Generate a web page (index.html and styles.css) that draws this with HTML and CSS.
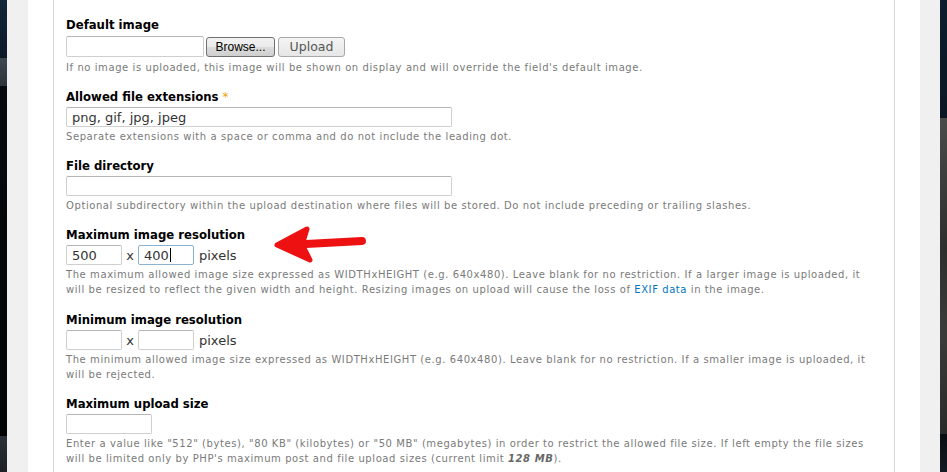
FILE: index.html
```html
<!DOCTYPE html>
<html>
<head>
<meta charset="utf-8">
<link rel="stylesheet" href="styles.css">
</head>
<body>
<div class="page">
  <div class="edge-left"></div>
  <div class="gutter"></div>
  <div class="panel">
    <div class="fieldset">
      <div class="item item-file">
        <label class="label">Default image</label>
        <div class="row">
          <span class="input w-file"></span>
          <span class="btn btn-browse">Browse...</span>
          <span class="btn btn-upload">Upload</span>
        </div>
        <div class="desc">If no image is uploaded, this image will be shown on display and will override the field's default image.</div>
      </div>
      <div class="item">
        <label class="label">Allowed file extensions <span class="req">*</span></label>
        <div class="row"><span class="input w-long">png, gif, jpg, jpeg</span></div>
        <div class="desc">Separate extensions with a space or comma and do not include the leading dot.</div>
      </div>
      <div class="item">
        <label class="label">File directory</label>
        <div class="row"><span class="input w-long"></span></div>
        <div class="desc">Optional subdirectory within the upload destination where files will be stored. Do not include preceding or trailing slashes.</div>
      </div>
      <div class="item tall">
        <label class="label">Maximum image resolution</label>
        <div class="row">
          <span class="input w-res">500</span><span class="times">x</span><span class="input w-res focus">400<span class="caret"></span></span><span class="unit">pixels</span>
        </div>
        <div class="desc">The maximum allowed image size expressed as WIDTHxHEIGHT (e.g. 640x480). Leave blank for no restriction. If a larger image is uploaded, it will be resized to reflect the given width and height. Resizing images on upload will cause the loss of <a class="link">EXIF data</a> in the image.</div>
      </div>
      <div class="item">
        <label class="label">Minimum image resolution</label>
        <div class="row">
          <span class="input w-res"></span><span class="times">x</span><span class="input w-res"></span><span class="unit">pixels</span>
        </div>
        <div class="desc">The minimum allowed image size expressed as WIDTHxHEIGHT (e.g. 640x480). Leave blank for no restriction. If a smaller image is uploaded, it will be rejected.</div>
      </div>
      <div class="item">
        <label class="label">Maximum upload size</label>
        <div class="row"><span class="input w-size"></span></div>
        <div class="desc">Enter a value like "512" (bytes), "80 KB" (kilobytes) or "50 MB" (megabytes) in order to restrict the allowed file size. If left empty the file sizes will be limited only by PHP's maximum post and file upload sizes (current limit <em class="limit">128 MB</em>).</div>
      </div>
    </div>
  </div>
  <div class="gutter gutter-right"></div>
  <div class="edge-right"></div>
  <svg class="arrow" width="947" height="472" viewBox="0 0 947 472">
    <path d="M306 244 L362 241" stroke="#ee1111" stroke-width="8" stroke-linecap="round" fill="none"/>
    <path d="M277 245 L307 229 L303 242 L304 248 L310 260 Z" fill="#ee1111" stroke="#ee1111" stroke-width="5" stroke-linejoin="round"/>
  </svg>
</div>
</body>
</html>
```
FILE: styles.css
```css
html, body {
  margin: 0;
  padding: 0;
  height: 100%;
  overflow: hidden;
}
.page {
  position: relative;
  display: flex;
  width: 947px;
  height: 472px;
  font-family: "DejaVu Sans", Verdana, sans-serif;
  color: #333;
}
.edge-left {
  width: 7px;
  flex: none;
  background: linear-gradient(to bottom, #12263a 0, #0c1a28 58px, #3e4852 58px, #2c333b 86px, #060a0f 86px, #020304 436px, #2b3138 436px, #1d2126 472px);
}
.edge-right {
  width: 7px;
  flex: none;
  background: linear-gradient(to bottom, #0d1d2d 0, #0a1622 118px, #4a4a48 118px, #2e2e2c 250px, #3c3b39 330px, #2a2a28 434px, #0a0d12 434px, #141a22 472px);
}
.gutter {
  width: 21px;
  flex: none;
  background: #f0f0f0;
}
.gutter-right {
  width: 20px;
}
.panel {
  flex: 1;
  background: #fff;
  padding-left: 25px;
  padding-right: 25px;
}
.fieldset {
  height: 100%;
  border-left: 1px solid #d6d6d6;
  border-right: 1px solid #d6d6d6;
  padding: 17px 12px 0 12px;
  box-sizing: border-box;
}
.item {
  margin-bottom: 14px;
}
.item.tall {
  margin-bottom: 15px;
}
.label {
  display: block;
  font-weight: bold;
  font-size: 11.7px;
  line-height: 16px;
  color: #000;
  margin-bottom: 2px;
}
.req {
  color: #e6a800;
  font-weight: normal;
}
.row {
  display: flex;
  align-items: center;
  height: 20px;
}
.item-file .row {
  height: 23px;
}
.input {
  display: flex;
  align-items: center;
  box-sizing: border-box;
  height: 20px;
  border: 1px solid #cfcfcf;
  border-top-color: #b5b5b5;
  border-radius: 2px;
  background: #fff;
  font-size: 13px;
  padding-left: 5px;
  color: #333;
}
.input.focus {
  border-color: #8db2cf;
}
.caret {
  display: inline-block;
  width: 1px;
  height: 14px;
  background: #000;
  margin-left: 1px;
}
.w-file { width: 138px; height: 21px; }
.w-long { width: 386px; }
.w-res { width: 56px; }
.w-size { width: 86px; }
.times {
  font-size: 13px;
  width: 16px;
  text-align: center;
}
.unit {
  font-size: 13px;
  margin-left: 5px;
}
.btn {
  display: flex;
  align-items: center;
  justify-content: center;
  box-sizing: border-box;
  height: 20px;
  border-radius: 3px;
  font-family: "Liberation Sans", Arial, sans-serif;
  font-size: 12px;
}
.btn-browse {
  width: 69px;
  margin-left: 2px;
  border: 1px solid #707070;
  background: linear-gradient(to bottom, #f2f2f2 0, #ebebeb 50%, #dddddd 50%, #cfcfcf 100%);
  color: #000;
}
.btn-upload {
  width: 67px;
  margin-left: 3px;
  border: 1px solid #a8a8a8;
  background: linear-gradient(to bottom, #f4f4f4 0, #e6e6e6 100%);
  color: #555;
  font-family: "DejaVu Sans", Verdana, sans-serif;
  font-size: 12.5px;
}
.desc {
  margin-top: 2px;
  font-size: 10px;
  line-height: 15px;
  color: #7a7a7a;
  letter-spacing: 0.58px;
}
.link {
  color: #0074bd;
}
.limit {
  font-weight: bold;
  color: #666;
  line-height: 1;
}
.arrow {
  position: absolute;
  left: 0;
  top: 0;
  pointer-events: none;
}
```
